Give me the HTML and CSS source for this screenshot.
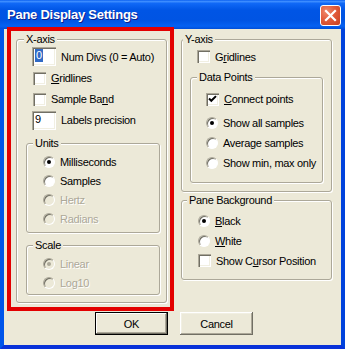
FILE: index.html
```html
<!DOCTYPE html>
<html lang="en">

<head>
    <meta charset="UTF-8">
    <title>Pane Display Settings</title>
    <link rel="stylesheet" href="styles.css">
</head>

<body>
    <div class="window">
        <!-- Caption bar -->
        <div class="titlebar">
            <span class="title">Pane Display Settings</span>
            <span class="close">
                <svg width="19" height="19" viewBox="0 0 19 19">
                    <path d="M5 5 L14 14 M14 5 L5 14" stroke="#fff" stroke-width="2.2" stroke-linecap="square" fill="none" />
                </svg>
            </span>
        </div>

        <div class="client">
            <div class="columns">
                <!-- Left column -->
                <div class="group xaxis">
                    <div class="group-title t-x">X-axis</div>
                    <div class="body xbody">
                        <div class="row item h21"><span class="textbox"><span class="sel">0</span></span><span>Num Divs (0 = Auto)</span></div>
                        <div class="row item h22"><span class="check nudge"></span><span><u>G</u>ridlines</span></div>
                        <div class="row item"><span class="check nudge"></span><span>Sample Ba<u>n</u>d</span></div>
                        <div class="row item h22"><span class="textbox">9</span><span>Labels precision</span></div>

                        <div class="group units">
                            <div class="group-title">Units</div>
                            <div class="body radios">
                                <div class="row h19"><span class="radio on"></span><span>Milliseconds</span></div>
                                <div class="row h19"><span class="radio"></span><span>Samples</span></div>
                                <div class="row h19 disabled"><span class="radio"></span><span>Hertz</span></div>
                                <div class="row h19 disabled"><span class="radio"></span><span>Radians</span></div>
                            </div>
                        </div>

                        <div class="group scale">
                            <div class="group-title">Scale</div>
                            <div class="body radios">
                                <div class="row h19 disabled"><span class="radio on"></span><span>Linear</span></div>
                                <div class="row h19 disabled"><span class="radio"></span><span>Log10</span></div>
                            </div>
                        </div>
                    </div>
                </div>

                <!-- Right column -->
                <div class="col-right">
                    <div class="group yaxis">
                        <div class="group-title t-y">Y-axis</div>
                        <div class="body ybody">
                            <div class="row h21 ygrid"><span class="check"></span><span>G<u>r</u>idlines</span></div>

                            <div class="group points">
                                <div class="group-title">Data Points</div>
                                <div class="body pbody">
                                    <div class="row first">
                                        <span class="check">
                                            <svg width="13" height="13" viewBox="0 0 13 13">
                                                <path d="M3 5.5 L5.3 7.8 L10 3.1" stroke="#000" stroke-width="2" fill="none" />
                                            </svg>
                                        </span>
                                        <span><u>C</u>onnect points</span>
                                    </div>
                                    <div class="row second"><span class="radio on"></span><span>Show all samples</span></div>
                                    <div class="row"><span class="radio"></span><span>Average samples</span></div>
                                    <div class="row h19"><span class="radio"></span><span>Show min, max only</span></div>
                                </div>
                            </div>
                        </div>
                    </div>

                    <div class="group background">
                        <div class="group-title t-bg">Pane Background</div>
                        <div class="body bgbody">
                            <div class="row first"><span class="radio on"></span><span><u>B</u>lack</span></div>
                            <div class="row h19"><span class="radio"></span><span><u>W</u>hite</span></div>
                            <div class="row h21"><span class="check"></span><span>Show C<u>u</u>rsor Position</span></div>
                        </div>
                    </div>
                </div>
            </div>

            <!-- Dialog buttons -->
            <div class="buttons">
                <button class="btn default">OK</button>
                <button class="btn">Cancel</button>
            </div>
        </div>

        <!-- Red highlight drawn over the X-axis group -->
        <div class="highlight"></div>
    </div>
</body>

</html>
```

FILE: styles.css
```css
* {
    box-sizing: border-box;
}

body {
    margin: 0;
    font-family: "Liberation Sans", Arial, sans-serif;
    font-size: 11px;
    letter-spacing: -0.3px;
    color: #000;
}

/* Window frame */
.window {
    position: relative;
    width: 345px;
    height: 349px;
    display: flex;
    flex-direction: column;
}

.titlebar {
    height: 29px;
    display: flex;
    justify-content: space-between;
    align-items: flex-start;
    padding: 0 4px 0 7px;
    background: linear-gradient(180deg, #0a5ff0 0%, #3d8dff 5%, #1068f6 12%, #0055e5 35%, #0054e3 70%, #0561f2 90%, #004ed8 100%);
}

.title {
    margin-top: 7px;
    color: #fff;
    font-weight: bold;
    font-size: 13px;
    line-height: 15px;
    letter-spacing: -0.25px;
    text-shadow: 1px 1px #0f1f8a;
}

.close {
    margin-top: 5px;
    width: 21px;
    height: 21px;
    display: flex;
    align-items: center;
    justify-content: center;
    border: 1px solid #fff;
    border-radius: 3px;
    background: radial-gradient(circle at 30% 30%, #f08a6c 0%, #e25c3c 45%, #c8401e 100%);
}

.client {
    flex: 1;
    background: #ece9d8;
    border-left: 4px solid #0055ea;
    border-right: 4px solid #0042dc;
    border-bottom: 4px solid #0831d9;
    padding: 10px 0 0 12px;
}

.columns {
    display: flex;
    gap: 14px;
    align-items: flex-start;
}

/* Group boxes */
.group {
    border: 1px solid #aca899;
    border-radius: 3px;
    box-shadow: inset 1px 1px #fff, 1px 1px #fff;
}

.group-title {
    display: table;
    margin: -7px 0 0 6px;
    padding: 0 2px;
    line-height: 13px;
    background: #ece9d8;
}

.t-x {
    margin-left: 7px;
}

.t-y {
    margin-left: 1px;
}

.t-bg {
    margin-left: 5px;
}

.xaxis {
    width: 151px;
    height: 264px;
}

.xbody {
    padding: 0 6px 0 9px;
}

.xbody .item {
    padding-left: 6px;
}

.units {
    margin-top: 12px;
    height: 90px;
}

.scale {
    margin-top: 12px;
    height: 50px;
}

.radios {
    padding: 2px 0 0 16px;
}

.col-right {
    display: flex;
    flex-direction: column;
    gap: 8px;
}

.yaxis {
    width: 151px;
    height: 153px;
}

.ybody {
    padding-left: 8px;
}

.ygrid {
    padding-left: 7px;
}

.points {
    margin-top: 10px;
    width: 133px;
    height: 106px;
}

.pbody {
    padding-left: 15px;
}

.pbody .first {
    margin-top: 5px;
}

.pbody .second {
    margin-top: 4px;
}

.background {
    width: 151px;
    height: 80px;
}

.bgbody {
    padding-left: 16px;
}

.bgbody .first {
    margin-top: 4px;
}

/* Rows with a control and its label */
.row {
    display: flex;
    align-items: center;
    gap: 5px;
    height: 20px;
    white-space: nowrap;
}

.h19 {
    height: 19px;
}

.h21 {
    height: 21px;
}

.h22 {
    height: 22px;
}

.disabled {
    color: #aca899;
    text-shadow: 1px 1px #fff;
}

/* Classic sunken controls */
.textbox {
    width: 24px;
    height: 19px;
    padding: 2px 0 0 3px;
    line-height: 13px;
    background: #fff;
    box-shadow: inset 1px 1px #aca899, inset 2px 2px #716f64, inset -1px -1px #fff, inset -2px -2px #f1efe2;
}

.sel {
    display: inline-block;
    padding: 0 1px;
    background: #316ac5;
    color: #fff;
}

.check {
    flex: none;
    width: 13px;
    height: 13px;
    background: #fff;
    box-shadow: inset 1px 1px #aca899, inset 2px 2px #716f64, inset -1px -1px #fff, inset -2px -2px #f1efe2;
}

.check svg {
    display: block;
}

.nudge {
    margin-left: 1px;
}

.radio {
    flex: none;
    position: relative;
    width: 12px;
    height: 12px;
    border-radius: 50%;
    border: 1px solid;
    border-color: #aca899 #fff #fff #aca899;
    background: #fff;
    box-shadow: inset 1px 1px #716f64;
}

.disabled .radio {
    background: #ece9d8;
}

.radio.on::after {
    content: "";
    position: absolute;
    left: 3px;
    top: 3px;
    width: 4px;
    height: 4px;
    border-radius: 50%;
    background: #000;
}

.disabled .radio.on::after {
    background: #aca899;
}

/* Buttons */
.buttons {
    display: flex;
    gap: 12px;
    margin: 9px 0 0 79px;
}

.btn {
    width: 73px;
    height: 23px;
    padding: 0;
    border: none;
    background: #ece9d8;
    font: inherit;
    letter-spacing: inherit;
    color: #000;
    box-shadow: inset -1px -1px #716f64, inset 1px 1px #fff, inset -2px -2px #aca899, inset 2px 2px #f1efe2;
}

.btn.default {
    box-shadow: inset 0 0 0 1px #000, inset -2px -2px #716f64, inset 2px 2px #fff, inset -3px -3px #aca899;
}

/* Annotation box over the left group */
.highlight {
    position: absolute;
    left: 7px;
    top: 27px;
    width: 167px;
    height: 284px;
    border: 4px solid #e30000;
}
```
